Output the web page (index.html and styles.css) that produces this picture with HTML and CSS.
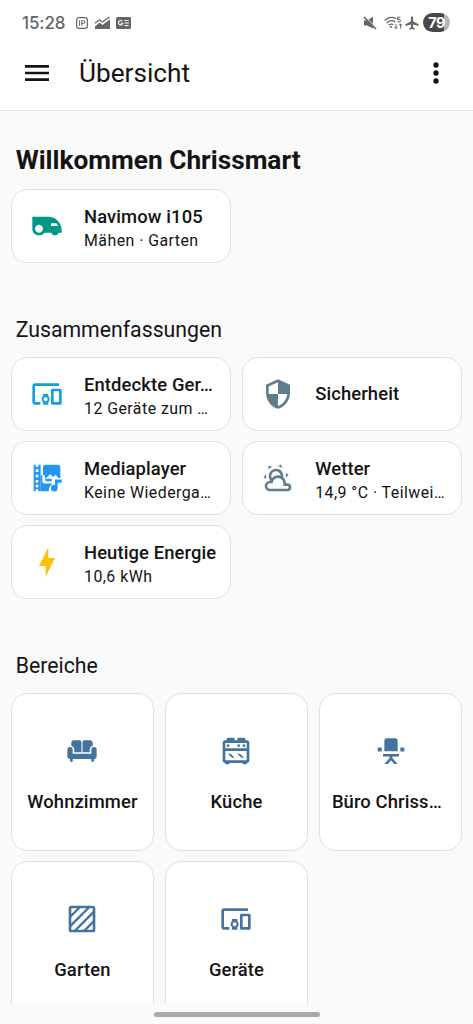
FILE: index.html
```html
<!DOCTYPE html>
<html lang="de">
<head>
<meta charset="utf-8">
<title>Übersicht</title>
<link rel="stylesheet" href="styles.css">
</head>
<body>
<div class="statusbar">
  <span class="clock">15:28</span>
  <svg class="st-ip" viewBox="0 0 12 12"><rect x=".7" y=".7" width="10.6" height="10.6" rx="2" fill="none" stroke="currentColor" stroke-width="1.2"/><path d="M3.6 3.3V8.7M5.8 8.7V3.7H7.4A1.3 1.3 0 0 1 7.4 6.5H5.8" fill="none" stroke="currentColor"/></svg>
  <svg class="st-chart" viewBox="0 0 17 14"><path d="M1 7.2L5.5 3.7 8.5 6 15.5 1" fill="none" stroke="currentColor" stroke-width="1.3"/><path d="M1 10.5L5.5 6.5 8.5 9 16 3.3V13H1Z"/></svg>
  <svg class="st-news" viewBox="0 0 15 12"><path d="M1.5 0H13.5A1.5 1.5 0 0 1 15 1.5V10.5A1.5 1.5 0 0 1 13.5 12H1.5A1.5 1.5 0 0 1 0 10.5V1.5A1.5 1.5 0 0 1 1.5 0Z"/><path d="M6.3 4.2A2.2 2.2 0 1 0 6.8 6.2H4.8M8.5 3.5H12.5M8.5 6H13M8.5 8.5H12.5" fill="none" stroke="#fff" stroke-width="1.1"/></svg>
  <span class="spacer"></span>
  <svg class="st-mute" viewBox="0 0 14 14"><path d="M1 4.5H4L10 .8V12.5L4 9.5H1Z"/><path d="M0 1L12.5 14" stroke="#fff" stroke-width="1.2" transform="translate(1.2 -1.2)"/><path d="M1 1L13 13" stroke="currentColor" stroke-width="1.7"/></svg>
  <svg class="st-wifi" viewBox="0 0 19 14"><g fill="none" stroke="currentColor" stroke-width="1.3"><path d="M.8 4.5Q6 -.6 12 2.6M2.7 6.9Q7 3 11.3 6M4.6 9.2Q7 7.2 9.3 8.8"/><path d="M16.3 1.2H13.7V3.5Q16.5 3 16.3 5 15.9 6.5 13.4 5.8" stroke-width="1.1"/><path d="M12 8V12.5M10.3 11L12 12.7 13.7 11M16.5 12.5V8M14.8 9.5L16.5 7.8 18.2 9.5" stroke-width="1"/></g><circle cx="7" cy="11" r="1"/></svg>
  <svg class="st-plane" viewBox="0 0 14 14"><path d="M7 .3Q8 .5 8.100 2V5.200L13.500 8.300V10L8.100 8.500V11.300L9.800 12.400V13.700L7 12.900 4.200 13.700V12.400L5.900 11.300V8.500L.5 10V8.300L5.900 5.200V2Q6 .5 7 .3Z"/></svg>
  <span class="battery">79</span>
</div>
<header class="appbar">
  <svg class="menu" viewBox="0 0 24 24"><path d="M3 6H21V8H3V6M3 11H21V13H3V11M3 16H21V18H3V16Z"/></svg>
  <h1>Übersicht</h1>
  <svg class="dots" viewBox="0 0 24 24"><path d="M12 16A2 2 0 0 1 14 18A2 2 0 0 1 12 20A2 2 0 0 1 10 18A2 2 0 0 1 12 16M12 10A2 2 0 0 1 14 12A2 2 0 0 1 12 14A2 2 0 0 1 10 12A2 2 0 0 1 12 10M12 4A2 2 0 0 1 14 6A2 2 0 0 1 12 8A2 2 0 0 1 10 6A2 2 0 0 1 12 4Z"/></svg>
</header>
<main class="content">
  <h2 class="welcome">Willkommen Chrissmart</h2>
  <section class="tiles">
    <article class="tile"><svg class="icon teal" viewBox="0 0 24 24"><path d="M1 14V5H13C18.5 5 23 9.5 23 15V17H20.83C20.42 18.17 19.31 19 18 19C16.69 19 15.58 18.17 15.17 17H10C9.09 18.21 7.64 19 6 19C3.24 19 1 16.76 1 14M6 11C4.34 11 3 12.34 3 14C3 15.66 4.34 17 6 17C7.66 17 9 15.66 9 14C9 12.34 7.66 11 6 11M15 10V12H20.25C19.92 11.27 19.5 10.6 19 10H15Z"/></svg><div class="info two-line"><div class="name">Navimow i105</div><div class="state">Mähen · Garten</div></div></article>
  </section>
  <h3 class="heading">Zusammenfassungen</h3>
  <section class="tiles">
    <article class="tile"><svg class="icon sky" viewBox="0 0 24 24"><path d="M3 6H21V4H3C1.9 4 1 4.9 1 6V18C1 19.1 1.9 20 3 20H7V18H3V6M13 12H9V13.78C8.39 14.33 8 15.11 8 16C8 16.89 8.39 17.67 9 18.22V20H13V18.22C13.61 17.67 14 16.88 14 16S13.61 14.33 13 13.78V12M11 17.5C10.17 17.5 9.5 16.83 9.5 16S10.17 14.5 11 14.5 12.5 15.17 12.5 16 11.83 17.5 11 17.5M22 8H16C15.5 8 15 8.5 15 9V19C15 19.5 15.5 20 16 20H22C22.5 20 23 19.5 23 19V9C23 8.5 22.5 8 22 8M21 18H17V10H21V18Z"/></svg><div class="info two-line"><div class="name">Entdeckte Ger…</div><div class="state">12 Geräte zum …</div></div></article>
    <article class="tile"><svg class="icon slate" viewBox="0 0 24 24"><path d="M12 12H19C18.47 16.11 15.72 19.78 12 20.92V12H5V6.3L12 3.19M12 1L3 5V11C3 16.55 6.84 21.73 12 23C17.16 21.73 21 16.55 21 11V5L12 1Z"/></svg><div class="info"><div class="name">Sicherheit</div></div></article>
    <article class="tile"><svg class="icon blue" viewBox="0 0 24 24"><path fill-rule="evenodd" d="M2 2H3.5V3.5H5.5V2H7.2V22H5.5V20.5H3.5V22H2V2M3.5 5.5V7.5H5.5V5.5H3.5M3.5 9.5V11.5H5.5V9.5H3.5M3.5 13.5V15.5H5.5V13.5H3.5M3.5 17V19H5.5V17H3.5Z"/><path d="M11 2H20A2 2 0 0 1 22 4V12H20.500L18.500 9.500 16.500 11.500 14.500 9 11.500 12H9V4A2 2 0 0 1 11 2Z"/><path d="M9 12V10H10.500V12H16V13H9Z" fill="#fff"/><path d="M10.500 12.500H15.500V14.500H11.500Q10.500 14 10.500 12.500"/><path d="M7.2 10H8.5V14.500Q8.5 16.200 10.200 16.200H15.500V17.300Q13.500 18.500 13.200 22H7.2Z"/><path d="M18 13.200H23V15.600H20V19.500A2.500 2.500 0 1 1 18 17.100Z"/></svg><div class="info two-line"><div class="name">Mediaplayer</div><div class="state">Keine Wiederga…</div></div></article>
    <article class="tile"><svg class="icon slate" viewBox="0 0 24 24"><path d="M12.74,5.47C15.1,6.5 16.35,9.03 15.92,11.46C17.19,12.56 18,14.19 18,16V16.17C18.31,16.06 18.65,16 19,16A3,3 0 0,1 22,19A3,3 0 0,1 19,22H6A4,4 0 0,1 2,18A4,4 0 0,1 6,14H6.27C5,12.45 4.6,10.24 5.5,8.26C6.72,5.5 9.97,4.24 12.74,5.47M11.93,7.3C10.16,6.5 8.09,7.31 7.31,9.07C6.85,10.09 6.93,11.22 7.41,12.13C8.5,10.83 10.16,10 12,10C12.7,10 13.38,10.12 14,10.34C13.94,9.06 13.18,7.86 11.93,7.3M13.55,3.64C13,3.4 12.45,3.23 11.88,3.12L14.37,1.82L15.27,4.71C14.76,4.29 14.19,3.93 13.55,3.64M6.09,4.44C5.6,4.79 5.17,5.19 4.8,5.63L4.91,2.82L7.87,3.5C7.25,3.71 6.65,4.03 6.09,4.44M18,9.71C17.91,9.12 17.78,8.55 17.59,8L19.97,9.5L17.92,11.73C18.03,11.08 18.05,10.4 18,9.71M3.04,11.3C3.11,11.9 3.24,12.47 3.43,13L1.06,11.5L3.1,9.28C3,9.93 2.97,10.61 3.04,11.3M19,18H16V16A4,4 0 0,0 12,12A4,4 0 0,0 8,16H6A2,2 0 0,0 4,18A2,2 0 0,0 6,20H19A1,1 0 0,0 20,19A1,1 0 0,0 19,18Z"/></svg><div class="info two-line"><div class="name">Wetter</div><div class="state">14,9 °C · Teilwei…</div></div></article>
    <article class="tile"><svg class="icon amber" viewBox="0 0 24 24"><path d="M11 15H6L13 1V9H18L11 23V15Z"/></svg><div class="info two-line"><div class="name">Heutige Energie</div><div class="state">10,6 kWh</div></div></article>
  </section>
  <h3 class="heading">Bereiche</h3>
  <section class="areas">
    <article class="area"><svg class="icon" viewBox="0 0 24 24"><path d="M6 4H10A1.5 1.5 0 0 1 11.6 5.5V13H6.2V11A3 3 0 0 0 4 8.2V6A2 2 0 0 1 6 4M14 4H18A2 2 0 0 1 20 6V8.2A3 3 0 0 0 17.8 11V13H12.4V5.5A1.5 1.5 0 0 1 14 4M3 9A2 2 0 0 1 5 11V14H19V11A2 2 0 0 1 23 11V16A2 2 0 0 1 21 18V20H19V18H5V20H3V18A2 2 0 0 1 1 16V11A2 2 0 0 1 3 9Z"/></svg><div class="name">Wohnzimmer</div></article>
    <article class="area"><svg class="icon" viewBox="0 0 24 24"><path d="M6,14H8L11,17H9L6,14M4,4H5V3A1,1 0 0,1 6,2H10A1,1 0 0,1 11,3V4H13V3A1,1 0 0,1 14,2H18A1,1 0 0,1 19,3V4H20A2,2 0 0,1 22,6V19A2,2 0 0,1 20,21V22H17V21H7V22H4V21A2,2 0 0,1 2,19V6A2,2 0 0,1 4,4M18,7A1,1 0 0,1 19,8A1,1 0 0,1 18,9A1,1 0 0,1 17,8A1,1 0 0,1 18,7M14,7A1,1 0 0,1 15,8A1,1 0 0,1 14,9A1,1 0 0,1 13,8A1,1 0 0,1 14,7M20,6H4V10H20V6M4,19H20V12H4V19M6,7A1,1 0 0,1 7,8A1,1 0 0,1 6,9A1,1 0 0,1 5,8A1,1 0 0,1 6,7M13,14H15L18,17H16L13,14Z"/></svg><div class="name">Küche</div></article>
    <article class="area"><svg class="icon" viewBox="0 0 24 24"><path d="M9 2.5H15A2 2 0 0 1 17 4.5V12.2H7V4.5A2 2 0 0 1 9 2.5M2 9.3H5V12.3H2V9.3M19 9.3H22V12.3H19V9.3M6 14.2H18V16.2H13V17.2L17 21.7H14.3L12 19 9.7 21.7H7L11 17.2V16.2H6V14.2Z"/></svg><div class="name clipped">Büro Chriss…</div></article>
    <article class="area"><svg class="icon" viewBox="0 0 24 24"><g fill="none" stroke="currentColor" stroke-width="2"><rect x="3" y="3" width="18" height="18" rx="1"/><path d="M3 10.5L10.5 3M3 17.5L17.5 3M6.5 21L21 6.5M13.5 21L21 13.5" stroke-width="1.8"/></g></svg><div class="name">Garten</div></article>
    <article class="area"><svg class="icon" viewBox="0 0 24 24"><path d="M3 6H21V4H3C1.9 4 1 4.9 1 6V18C1 19.1 1.9 20 3 20H7V18H3V6M13 12H9V13.78C8.39 14.33 8 15.11 8 16C8 16.89 8.39 17.67 9 18.22V20H13V18.22C13.61 17.67 14 16.88 14 16S13.61 14.33 13 13.78V12M11 17.5C10.17 17.5 9.5 16.83 9.5 16S10.17 14.5 11 14.5 12.5 15.17 12.5 16 11.83 17.5 11 17.5M22 8H16C15.5 8 15 8.5 15 9V19C15 19.5 15.5 20 16 20H22C22.5 20 23 19.5 23 19V9C23 8.5 22.5 8 22 8M21 18H17V10H21V18Z"/></svg><div class="name">Geräte</div></article>
  </section>
</main>
<footer class="navbar"><span class="handle"></span></footer>
</body>
</html>
```
FILE: styles.css
```css
* { box-sizing: border-box; }
body {
  margin: 0;
  height: 1024px;
  display: flex;
  flex-direction: column;
  overflow: hidden;
  background: #fafafa;
  color: #141414;
  font-family: Roboto, sans-serif;
}
h1, h2, h3 { margin: 0; }
svg { fill: currentColor; flex: none; display: block; }

.statusbar {
  height: 36px;
  flex: none;
  display: flex;
  align-items: center;
  padding: 9px 23px 0 22px;
  background: #fff;
  color: #666;
}
.clock { width: 54px; font: 500 17px/20px Inter, sans-serif; letter-spacing: -0.1px; }
.st-ip { width: 12px; height: 12px; }
.st-chart { width: 17px; height: 14px; margin-left: 6px; }
.st-news { width: 15px; height: 12px; margin-left: 5px; }
.spacer { flex: 1; }
.st-mute { width: 14px; height: 14px; margin-right: 7px; }
.st-wifi { width: 19px; height: 14px; margin-right: 2px; }
.st-plane { width: 14px; height: 14px; margin-right: 4px; }
.battery {
  width: 27px;
  height: 19px;
  border-radius: 10px;
  background: linear-gradient(90deg, #484848 79%, #b5b5b5 79%);
  color: #fff;
  text-align: center;
  font: 700 14.5px/19px Inter, sans-serif;
  letter-spacing: -0.5px;
}

.appbar {
  height: 74.5px;
  flex: none;
  display: flex;
  align-items: center;
  padding: 0 21px;
  background: #fff;
  border-bottom: 1px solid #e0e0e0;
}
.menu, .dots { width: 32px; height: 32px; }
.appbar h1 { flex: 1; margin-left: 26px; font-size: 26.2px; line-height: 32px; font-weight: 400; }

.content { flex: 1; min-height: 0; overflow: hidden; padding: 32.4px 10.7px 0; }
.welcome { height: 46.6px; padding-left: 5px; font-size: 26.25px; line-height: 34px; font-weight: 700; }
.heading { height: 94.7px; padding: 52.3px 0 0 5px; font-size: 21.25px; line-height: 29px; font-weight: 400; }

.tiles { display: grid; grid-template-columns: repeat(2, minmax(0, 1fr)); gap: 10.7px; }
.tile {
  height: 73.3px;
  display: flex;
  align-items: center;
  padding: 0 12px 0 19.3px;
  background: #fff;
  border: 1.3px solid #e0e0e0;
  border-radius: 16px;
}
.icon { width: 32px; height: 32px; }
.info { flex: 1; min-width: 0; margin-left: 21px; }
.two-line { padding-top: 4px; }
.name, .state { overflow: hidden; white-space: nowrap; text-overflow: ellipsis; }
.name { font-size: 18.4px; line-height: 26px; font-weight: 500; letter-spacing: 0.12px; }
.state { font-size: 15.9px; line-height: 22px; letter-spacing: 0.46px; }
.teal { color: #009688; }
.sky { color: #149fdf; }
.blue { color: #2196f3; }
.slate { color: #607d8b; }
.amber { color: #ffc107; }

.areas { display: grid; grid-template-columns: repeat(3, minmax(0, 1fr)); gap: 10.7px; }
.area {
  height: 157.3px;
  padding: 41px 12px 0;
  display: flex;
  flex-direction: column;
  align-items: center;
  background: #fff;
  border: 1.3px solid #e0e0e0;
  border-radius: 16px;
}
.area .icon { color: #44739e; }
.area .name { max-width: 100%; margin-top: 22px; }
.area .clipped { width: 100%; }

.navbar { height: 20px; flex: none; display: flex; justify-content: center; align-items: center; background: #fafafa; }
.handle { width: 166px; height: 5px; border-radius: 3px; background: #aaa; }
```
